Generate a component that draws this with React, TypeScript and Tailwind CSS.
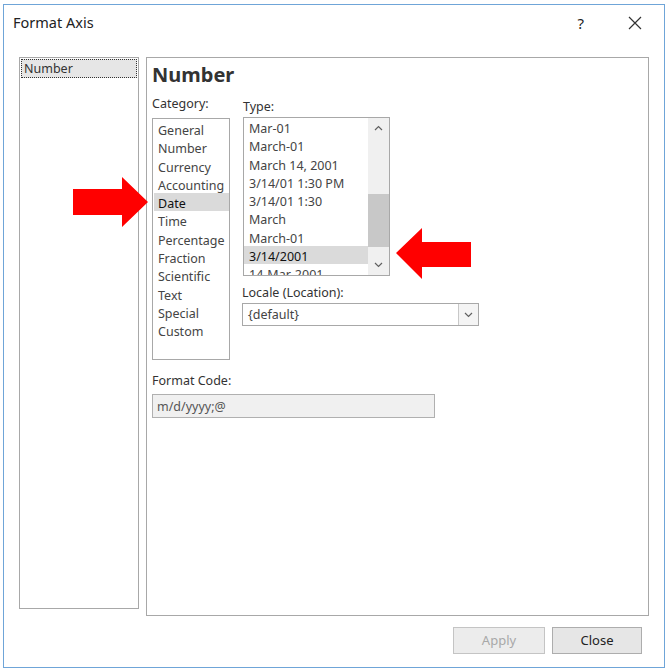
import React from 'react';

const categories = [
  'General',
  'Number',
  'Currency',
  'Accounting',
  'Date',
  'Time',
  'Percentage',
  'Fraction',
  'Scientific',
  'Text',
  'Special',
  'Custom',
];

const types = [
  'Mar-01',
  'March-01',
  'March 14, 2001',
  '3/14/01 1:30 PM',
  '3/14/01 1:30',
  'March',
  'March-01',
  '3/14/2001',
  '14-Mar-2001',
];

const font = { fontFamily: '"Noto Sans", "Open Sans", sans-serif' };

const Chevron: React.FC<{ up?: boolean }> = ({ up }) => (
  <svg width="9" height="6" viewBox="0 0 9 6" className="block">
    <polyline
      points={up ? '1,5 4.5,1.5 8,5' : '1,1 4.5,4.5 8,1'}
      fill="none"
      stroke="#606060"
      strokeWidth="1.2"
    />
  </svg>
);

const App: React.FC = () => {
  return (
    <div
      className="relative w-[668px] h-[672px] overflow-hidden bg-white pl-[3px] pt-[4px] text-[#333]"
      style={font}
    >
      <div className="flex h-[664px] w-[662px] flex-col border border-[#6fa5d8] bg-white">
        {/* title bar */}
        <div className="flex h-[36px] items-center pl-[9px] pr-[22px]">
          <span className="text-[14.5px] text-[#222]">Format Axis</span>
          <span className="ml-auto mr-[3px] text-[15px] text-[#222]">?</span>
          <svg width="14" height="14" viewBox="0 0 14 14" className="ml-[41px]">
            <path d="M1 1 L13 13 M13 1 L1 13" stroke="#333" strokeWidth="1.2" />
          </svg>
        </div>

        <div className="mt-[16px] flex pl-[15px]">
          {/* left nav pane */}
          <div className="h-[552px] w-[120px] border border-[#a8a8a8] p-[1px]">
            <div className="h-[19px] border border-dotted border-[#333] bg-[#e6e6e6] pl-[2px] pt-[1px] text-[12.5px] leading-[16px]">
              Number
            </div>
          </div>

          {/* main pane */}
          <div className="ml-[7px] flex h-[559px] w-[503px] flex-col border border-[#a8a8a8] px-[5px] pt-[4px]">
            <div className="h-[28px] text-[20px] font-bold leading-[26px] text-[#333]">Number</div>

            <div className="flex">
              <div className="flex w-[78px] flex-col">
                <div className="mt-[2px] h-[20px] pt-[4px] text-[12.5px] leading-[16px]">Category:</div>
                <div className="mt-[6px] h-[242px] border border-[#a8a8a8] pt-[1px]">
                  {categories.map((c) => (
                    <div
                      key={c}
                      className={`ml-[1px] h-[18.3px] pl-[4px] pt-[4px] text-[12.5px] leading-[14.3px] ${
                        c === 'Date' ? 'bg-[#dadada] text-[#111]' : 'text-[#444]'
                      }`}
                    >
                      {c}
                    </div>
                  ))}
                </div>
              </div>

              <div className="ml-[13px] flex flex-col">
                <div className="mt-[5px] h-[20px] pt-[4px] text-[12.5px] leading-[16px]">Type:</div>
                <div className="mt-[2px] flex h-[159px] w-[147px] border border-[#a8a8a8]">
                  <div className="flex-1 overflow-hidden">
                    {types.map((t, i) => (
                      <div
                        key={i}
                        className={`h-[18.3px] whitespace-nowrap pl-[5px] pt-[4px] text-[12.5px] leading-[14.3px] ${
                          i === 7 ? 'bg-[#dadada] text-[#111]' : 'text-[#444]'
                        }`}
                      >
                        {t}
                      </div>
                    ))}
                  </div>
                  <div className="flex w-[21px] flex-col bg-[#f0f0f0]">
                    <div className="flex h-[20px] items-center justify-center">
                      <Chevron up />
                    </div>
                    <div className="mt-[56px] h-[53px] bg-[#c8c8c8]" />
                    <div className="mt-auto flex h-[20px] items-center justify-center">
                      <Chevron />
                    </div>
                  </div>
                </div>

                <div className="-ml-[1px] mt-[5px] h-[20px] pt-[4px] text-[12.5px] leading-[16px]">
                  Locale (Location):
                </div>
                <div className="-ml-[1px] mt-[2px] flex h-[23px] w-[237px] border border-[#a8a8a8]">
                  <div className="flex-1 pl-[5px] pt-[1px] text-[12.5px] leading-[20px] text-[#444]">{'{default}'}</div>
                  <div className="flex w-[20px] items-center justify-center border-l border-[#c8c8c8] bg-[#f4f4f4]">
                    <Chevron />
                  </div>
                </div>
              </div>
            </div>

            <div className="mt-[9px] h-[20px] pt-[4px] text-[12.5px] leading-[16px]">Format Code:</div>
            <div className="mt-[5px] h-[24px] w-[283px] border border-[#b0b0b0] bg-[#f0f0f0] pl-[4px] pt-[1px] text-[12.5px] leading-[21px] text-[#555]">
              m/d/yyyy;@
            </div>
          </div>
        </div>

        {/* footer buttons */}
        <div className="mt-[11px] flex justify-end gap-[7px] pr-[22px]">
          <button className="h-[27px] w-[92px] border border-[#c4c4c4] bg-[#ececec] text-[13px] text-[#a8a8a8]">
            Apply
          </button>
          <button className="h-[27px] w-[90px] border border-[#adadad] bg-[#e6e6e6] text-[13px] text-[#222]">
            Close
          </button>
        </div>
      </div>

      {/* red callout arrows */}
      <svg className="pointer-events-none absolute left-0 top-0" width="668" height="672">
        <polygon
          points="73,189 122,189 122,177 148,202 122,227 122,215 73,215"
          fill="#ff0000"
        />
        <polygon
          points="471,242 422,242 422,228 396,253 422,279 422,267 471,267"
          fill="#ff0000"
        />
      </svg>
    </div>
  );
};

export default App;
